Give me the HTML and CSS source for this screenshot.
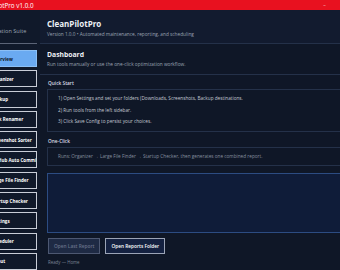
FILE: index.html
```html
<!DOCTYPE html>
<html lang="en">
<head>
    <meta charset="UTF-8">
    <title>CleanPilotPro</title>
    <link rel="stylesheet" href="styles.css">
</head>
<body>
    <div class="app">
        <div class="titlebar">
            <span class="titlebar-text">CleanPilotPro v1.0.0</span>
            <div class="win-buttons">
                <span class="win-btn">&#8211;</span>
                <span class="win-btn">&#9633;</span>
                <span class="win-btn">&#10005;</span>
            </div>
        </div>

        <div class="body">
            <aside class="sidebar">
                <div class="brand">
                    <div class="brand-sub">Automation Suite</div>
                </div>
                <nav class="nav">
                    <button class="nav-btn active">Overview</button>
                    <button class="nav-btn">Organizer</button>
                    <button class="nav-btn">Backup</button>
                    <button class="nav-btn">Bulk Renamer</button>
                    <button class="nav-btn">Screenshot Sorter</button>
                    <button class="nav-btn">GitHub Auto Commit</button>
                    <button class="nav-btn">Large File Finder</button>
                    <button class="nav-btn">Startup Checker</button>
                    <button class="nav-btn">Settings</button>
                    <button class="nav-btn">Scheduler</button>
                    <button class="nav-btn">About</button>
                </nav>
            </aside>

            <main class="main">
                <header class="header">
                    <h1>CleanPilotPro</h1>
                    <p>Version 1.0.0 &bull; Automated maintenance, reporting, and scheduling</p>
                </header>

                <section class="page-head">
                    <h2>Dashboard</h2>
                    <p>Run tools manually or use the one-click optimization workflow.</p>
                </section>

                <div class="content">
                    <div class="group-label">Quick Start</div>
                    <div class="group">
                        <p>1) Open Settings and set your folders (Downloads, Screenshots, Backup destinations.</p>
                        <p>2) Run tools from the left sidebar.</p>
                        <p>3) Click Save Config to persist your choices.</p>
                    </div>

                    <div class="group-label">One-Click</div>
                    <div class="group group-dim">
                        <p>Runs: Organizer &rarr; Large File Finder &rarr; Startup Checker, then generates one combined report.</p>
                    </div>

                    <div class="log"></div>

                    <div class="actions">
                        <button class="btn" disabled>Open Last Report</button>
                        <button class="btn btn-primary">Open Reports Folder</button>
                    </div>

                    <div class="status">Ready &mdash; Home</div>
                </div>
            </main>
        </div>
    </div>
</body>
</html>
```

FILE: styles.css
```css
:root {
    --title-red: #e8111f;
    --bg: #0f1727;
    --side-bg: #10192a;
    --head-bg: #121b2f;
    --line: #243149;
    --text: #eef1f6;
    --muted: #9aa3b3;
    --dim: #7b8494;
}

* {
    box-sizing: border-box;
    margin: 0;
    padding: 0;
}

body {
    background: var(--bg);
    font-family: 'Open Sans', 'Noto Sans', sans-serif;
    color: var(--text);
    overflow: hidden;
}

/* the window is wider than the capture, its left edge sits off-screen */
.app {
    width: 400px;
    height: 270px;
    margin-left: -28px;
    display: flex;
    flex-direction: column;
}

.titlebar {
    height: 10px;
    background: var(--title-red);
    display: flex;
    align-items: center;
    justify-content: space-between;
    padding-left: 3px;
}

.titlebar-text {
    font-size: 6.3px;
    color: #fff;
}

.win-buttons {
    display: flex;
}

.win-btn {
    width: 19px;
    font-size: 5px;
    text-align: center;
    color: #f6c9cc;
}

.body {
    flex: 1;
    display: flex;
    min-height: 0;
}

.sidebar {
    width: 68px;
    background: var(--side-bg);
    padding: 0 3px 0 9px;
}

.brand {
    height: 34px;
    border-bottom: 1px solid #5b6477;
    display: flex;
    align-items: flex-end;
    padding-bottom: 8px;
}

.brand-sub {
    font-size: 5.6px;
    color: var(--muted);
    white-space: nowrap;
}

.nav {
    display: flex;
    flex-direction: column;
    gap: 3.3px;
    padding-top: 6px;
}

.nav-btn {
    height: 17px;
    padding: 0 9.5px;
    background: var(--side-bg);
    border: 1px solid #c9ced8;
    color: #fff;
    font-family: inherit;
    font-size: 4.5px;
    font-weight: 700;
    text-align: left;
    white-space: nowrap;
    overflow: hidden;
}

.nav-btn.active {
    background: #6aaaf1;
    border-color: #8cc0f6;
    color: #0b1322;
}

.main {
    flex: 1;
    display: flex;
    flex-direction: column;
}

.header {
    height: 34px;
    background: var(--head-bg);
    border-bottom: 1px solid var(--line);
    padding: 9px 7px 0;
}

.header h1 {
    font-size: 8px;
    font-weight: 700;
    line-height: 10px;
}

.header p {
    font-size: 4.75px;
    color: var(--muted);
    margin-top: 2px;
}

.page-head {
    height: 31px;
    border-bottom: 1px solid var(--line);
    padding: 6px 7px 0;
}

.page-head h2 {
    font-size: 6.8px;
    font-weight: 700;
    line-height: 9px;
}

.page-head p {
    font-size: 4.75px;
    color: var(--muted);
    margin-top: 2px;
}

.content {
    padding: 5px 7px 0;
    display: flex;
    flex-direction: column;
}

.group-label {
    font-size: 4.8px;
    font-weight: 600;
    color: #d9dee7;
    height: 9px;
    padding-left: 1px;
}

.group {
    border: 1px solid var(--line);
    padding: 5px 10px 5px;
    margin-bottom: 6px;
    display: flex;
    flex-direction: column;
    gap: 4px;
}

.group p {
    font-size: 4.7px;
    line-height: 7.5px;
    color: #c3c9d3;
}

.group-dim p {
    color: #868f9f;
}

.log {
    height: 60px;
    background: #0f1c39;
    border: 1px solid #2c4c82;
    margin-top: 1px;
}

.actions {
    display: flex;
    gap: 5px;
    padding: 5px 1px 0;
}

.btn {
    height: 16px;
    padding: 0 5px;
    font-family: inherit;
    font-size: 4.8px;
    font-weight: 600;
    background: #1e2a44;
    border: 1px solid #4d5872;
    color: #67728a;
}

.btn-primary {
    background: #142140;
    border-color: #9ba4b6;
    color: #fff;
}

.status {
    font-size: 4.4px;
    color: var(--dim);
    padding: 5px 1px 0;
}
```
